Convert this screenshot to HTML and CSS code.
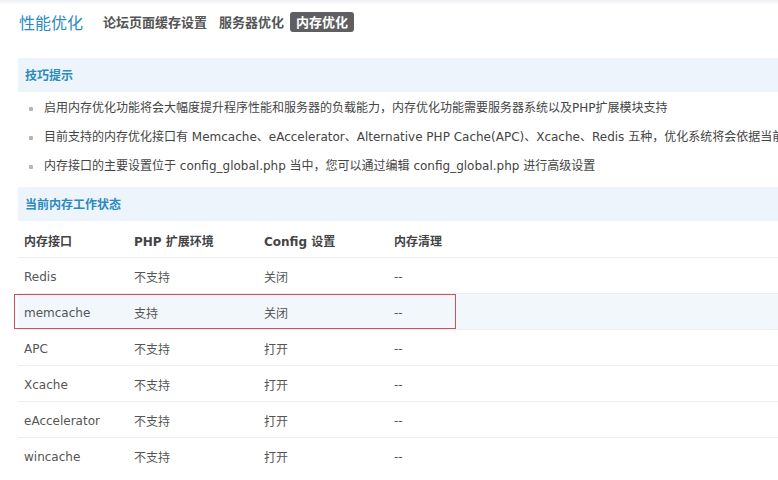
FILE: index.html
```html
<!DOCTYPE html>
<html lang="zh-CN">
<head>
<meta charset="utf-8">
<title>性能优化 - 内存优化</title>
<link rel="stylesheet" href="styles.css">
</head>
<body>
<div class="topstrip"></div>
<div class="top">
  <h1 class="title">性能优化</h1>
  <a class="nav">论坛页面缓存设置</a>
  <a class="nav">服务器优化</a>
  <a class="nav active">内存优化</a>
</div>
<div class="main">
  <div class="band">技巧提示</div>
  <ul class="tips">
    <li>启用内存优化功能将会大幅度提升程序性能和服务器的负载能力，内存优化功能需要服务器系统以及PHP扩展模块支持</li>
    <li>目前支持的内存优化接口有 Memcache、eAccelerator、Alternative PHP Cache(APC)、Xcache、Redis 五种，优化系统将会依据当前服务器环境依次选用接口</li>
    <li>内存接口的主要设置位于 config_global.php 当中，您可以通过编辑 config_global.php 进行高级设置</li>
  </ul>
  <div class="band band2">当前内存工作状态</div>
  <div class="tablewrap">
    <table class="status">
      <thead>
        <tr><th class="c1">内存接口</th><th class="c2">PHP 扩展环境</th><th class="c3">Config 设置</th><th>内存清理</th></tr>
      </thead>
      <tbody>
        <tr><td>Redis</td><td>不支持</td><td>关闭</td><td>--</td></tr>
        <tr class="hover"><td>memcache</td><td>支持</td><td>关闭</td><td>--</td></tr>
        <tr><td>APC</td><td>不支持</td><td>打开</td><td>--</td></tr>
        <tr><td>Xcache</td><td>不支持</td><td>打开</td><td>--</td></tr>
        <tr><td>eAccelerator</td><td>不支持</td><td>打开</td><td>--</td></tr>
        <tr><td>wincache</td><td>不支持</td><td>打开</td><td>--</td></tr>
      </tbody>
    </table>
    <div class="mark"></div>
  </div>
</div>
</body>
</html>
```
FILE: styles.css
```css
html, body {
  margin: 0;
  padding: 0;
  overflow: hidden;
  background: #fff;
}
body {
  font-family: "DejaVu Sans", "Noto Sans CJK SC", sans-serif;
  font-size: 12px;
  color: #555;
}
.topstrip {
  height: 4px;
  background: linear-gradient(#eef0f3, #fbfcfd);
}
.top {
  display: flex;
  align-items: center;
  height: 36px;
  padding-left: 19px;
}
.title {
  margin: 0 14px 0 0;
  font-size: 16px;
  font-weight: normal;
  color: #2b8bc0;
  font-family: "Noto Sans CJK SC", sans-serif;
}
.nav {
  font-family: "Noto Sans CJK SC", sans-serif;
  font-size: 13px;
  font-weight: bold;
  color: #555;
  padding: 0 6px;
  height: 20px;
  line-height: 20px;
}
.nav.active {
  background: #5f5f62;
  color: #fff;
  border-radius: 3px;
}
.main {
  margin-left: 18px;
  width: 1100px;
  margin-top: 18px;
}
.band {
  height: 34px;
  line-height: 34px;
  padding-left: 7px;
  background: #eef4fb;
  color: #2b8bc0;
  font-weight: bold;
  font-size: 12px;
  font-family: "Noto Sans CJK SC", sans-serif;
}
.band2 {
  margin-top: 6px;
}
.tips {
  list-style: none;
  margin: 2px 0 0;
  padding: 0;
}
.tips li {
  position: relative;
  height: 29px;
  line-height: 29px;
  padding-left: 26px;
  white-space: nowrap;
  color: #444;
}
.tips li::before {
  content: "";
  position: absolute;
  left: 11px;
  top: 13px;
  width: 4px;
  height: 4px;
  border-radius: 1px;
  background: #b5b5b5;
}
.tablewrap {
  position: relative;
}
.status {
  width: 100%;
  border-collapse: collapse;
}
.status th, .status td {
  text-align: left;
  padding: 2px 0 0 6px;
  height: 33px;
  border-bottom: 1px solid #eeeeee;
}
.status th {
  font-weight: bold;
  color: #444;
  height: 34px;
}
.status td {
  color: #555;
}
.status .c1 { width: 104px; }
.status .c2 { width: 124px; }
.status .c3 { width: 124px; }
.status tr.hover td {
  background: #f1f7fb;
}
.status tbody tr:last-child td {
  border-bottom: none;
}
.mark {
  position: absolute;
  left: -4px;
  top: 73px;
  width: 440px;
  height: 33px;
  border: 1px solid #d0505e;
}
```
